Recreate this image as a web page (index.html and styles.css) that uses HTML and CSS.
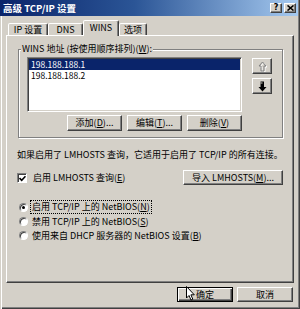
FILE: index.html
```html
<!DOCTYPE html>
<html lang="zh-CN">
<head>
<meta charset="utf-8">
<title>高级 TCP/IP 设置</title>
<link rel="stylesheet" href="styles.css">
</head>
<body>
<div class="window">
  <div class="titlebar">
    <span class="title">高级 TCP/IP 设置</span>
    <div class="tbtns">
      <span class="tbtn">?</span>
      <span class="tbtn"><svg width="7" height="6" viewBox="0 0 7 6"><path d="M0.5 0.5 L6.5 5.5 M6.5 0.5 L0.5 5.5" stroke="#000" stroke-width="1.6"/></svg></span>
    </div>
  </div>
  <div class="main">
    <div class="tabs">
      <div class="tab t1">IP 设置</div>
      <div class="tab t2">DNS</div>
      <div class="tab t3 active">WINS</div>
      <div class="tab t4">选项</div>
    </div>
    <div class="panel">
      <div class="group">
        <span class="legend">WINS 地址 (按使用顺序排列)(<u>W</u>):</span>
        <div class="group-main">
          <div class="listbox">
            <div class="item sel">198.188.188.1</div>
            <div class="item">198.188.188.2</div>
          </div>
          <div class="arrows">
            <div class="btn sq">
              <svg width="9" height="11" viewBox="0 0 9 11"><path d="M5.5 2 L9 6 H7 V11 H4 V6 H2 Z" fill="none" stroke="#fff"/><path d="M4.5 1 L8 5 H6 V10 H3 V5 H1 Z" fill="none" stroke="#808080"/></svg>
            </div>
            <div class="btn sq">
              <svg width="9" height="11" viewBox="0 0 9 11"><path d="M2.5 0.5 H6 V6 H8.5 L4.5 10.5 L0.5 6 H2.5 Z" fill="#000"/><path d="M2.5 2 H4.5" stroke="#d4d0c8" stroke-width="1"/></svg>
            </div>
          </div>
        </div>
        <div class="btnrow">
          <div class="btn pb">添加(<u>D</u>)...</div>
          <div class="btn pb">编辑(<u>T</u>)...</div>
          <div class="btn pb">删除(<u>V</u>)</div>
        </div>
      </div>
      <p class="note">如果启用了 LMHOSTS 查询，它适用于启用了 TCP/IP 的所有连接。</p>
      <div class="lmrow">
        <div class="check">
          <span class="cbox"><svg width="7" height="7" viewBox="0 0 7 7"><path d="M0.5 3 L2.7 5.3 L6.5 1.2" fill="none" stroke="#000" stroke-width="1.6"/></svg></span>
          <span>启用 LMHOSTS 查询(<u>E</u>)</span>
        </div>
        <div class="btn import">导入 LMHOSTS(<u>M</u>)...</div>
      </div>
      <div class="radios">
        <div class="radio"><span class="rcircle on"></span><span class="focus">启用 TCP/IP 上的 NetBIOS(<u>N</u>)</span></div>
        <div class="radio"><span class="rcircle"></span><span class="rlabel">禁用 TCP/IP 上的 NetBIOS(<u>S</u>)</span></div>
        <div class="radio"><span class="rcircle"></span><span class="rlabel">使用来自 DHCP 服务器的 NetBIOS 设置(<u>B</u>)</span></div>
      </div>
    </div>
    <div class="footer">
      <div class="btn fb default">确定</div>
      <div class="btn fb">取消</div>
    </div>
  </div>
  <svg class="cursor" width="9" height="15" viewBox="0 0 9 15"><path d="M0.5 0.5 V12 L3 9.5 L5 14 L6.8 13.2 L4.9 8.8 H8.3 Z" fill="#fff" stroke="#000" stroke-width="1"/></svg>
</div>
</body>
</html>
```

FILE: styles.css
```css
* { box-sizing: border-box; }

body {
  margin: 0;
  background: #d4d0c8;
  font-family: "Noto Sans CJK SC", "Noto Sans", sans-serif;
  font-size: 9px;
  color: #000;
}

u { text-decoration: underline; text-underline-offset: 1px; }

.window {
  position: relative;
  width: 300px;
  height: 309px;
  padding: 0 2px 2px 0;
  display: flex;
  flex-direction: column;
  box-shadow: inset 1px 0 0 #d4d0c8, inset 2px 0 0 #fff, inset -1px -1px 0 #404040, inset -2px -2px 0 #808080;
}

.titlebar {
  height: 16px;
  flex: none;
  display: flex;
  align-items: center;
  justify-content: space-between;
  padding: 0 2px 0 3px;
  background: linear-gradient(90deg, #0a246a 0%, #2b5596 45%, #a6caf0 100%);
}

.title {
  color: #fff;
  font-weight: bold;
  font-size: 9.5px;
  line-height: 16px;
  white-space: nowrap;
}

.tbtns { display: flex; gap: 2px; }

.tbtn {
  width: 12px;
  height: 10px;
  background: #d4d0c8;
  border: 1px solid;
  border-color: #fff #404040 #404040 #fff;
  box-shadow: inset -1px -1px 0 #808080;
  display: flex;
  align-items: center;
  justify-content: center;
  font: bold 8px "DejaVu Sans", sans-serif;
  line-height: 1;
  color: #000;
}

.main {
  flex: 1;
  display: flex;
  flex-direction: column;
  padding: 4px 4px 0 6px;
}

.tabs {
  display: flex;
  align-items: flex-end;
  height: 15px;
  padding-left: 2px;
  position: relative;
  z-index: 1;
}

.tab {
  height: 12px;
  border: 1px solid;
  border-bottom: none;
  border-color: #fff #404040 transparent #fff;
  border-radius: 2px 2px 0 0;
  box-shadow: inset -1px 0 0 #808080;
  text-align: center;
  line-height: 11px;
  white-space: nowrap;
  background: #d4d0c8;
}

.t1 { width: 40px; }
.t2 { width: 35px; }
.t3 { width: 36px; }
.t4 { width: 28px; }

.tab.active {
  height: 16px;
  margin-bottom: -1px;
  line-height: 11px;
  padding-top: 1px;
}

.panel {
  height: 248px;
  flex: none;
  border: 1px solid;
  border-color: #fff #404040 #404040 #fff;
  box-shadow: inset -1px -1px 0 #808080;
  padding: 13px 10px 0 11px;
  display: flex;
  flex-direction: column;
}

.group {
  position: relative;
  border: 1px solid #808080;
  box-shadow: 1px 1px 0 #fff, inset 1px 1px 0 #fff;
  padding: 7px 8px 6px 8px;
}

.legend {
  position: absolute;
  top: -7px;
  left: 2px;
  padding: 0 1px;
  background: #d4d0c8;
  line-height: 12px;
  white-space: nowrap;
}

.group-main { display: flex; align-items: flex-start; }

.listbox {
  width: 215px;
  height: 55px;
  background: #fff;
  border: 1px solid;
  border-color: #808080 #fff #fff #808080;
  box-shadow: inset 1px 1px 0 #404040, inset -1px -1px 0 #d4d0c8;
  padding: 1px;
}

.item {
  height: 11px;
  line-height: 11px;
  font-size: 8.5px;
  padding-left: 2px;
  white-space: nowrap;
}

.item.sel { background: #0a246a; color: #fff; }

.arrows {
  display: flex;
  flex-direction: column;
  gap: 4px;
  margin: 1px 0 0 10px;
}

.btn {
  background: #d4d0c8;
  border: 1px solid;
  border-color: #fff #404040 #404040 #fff;
  box-shadow: inset -1px -1px 0 #808080;
  display: flex;
  align-items: center;
  justify-content: center;
  white-space: nowrap;
  line-height: 12px;
}

.sq { width: 20px; height: 16px; }

.btnrow {
  width: 215px;
  display: flex;
  justify-content: flex-end;
  gap: 5px;
  margin-top: 3px;
}

.pb { width: 55px; height: 16px; }

.note {
  margin: 11px 0 0 -1px;
  line-height: 12px;
  white-space: nowrap;
}

.lmrow {
  display: flex;
  align-items: center;
  justify-content: space-between;
  height: 15px;
  margin-top: 9px;
}

.check {
  display: flex;
  align-items: center;
  gap: 6px;
  margin-left: -1px;
}

.cbox {
  width: 10px;
  height: 10px;
  background: #fff;
  border: 1px solid;
  border-color: #808080 #fff #fff #808080;
  box-shadow: inset 1px 1px 0 #404040;
  display: flex;
  align-items: center;
  justify-content: center;
  padding: 1px 0 0 1px;
}

.import { width: 100px; height: 15px; }

.radios {
  margin: 15px 0 0 1px;
}

.radio {
  display: flex;
  align-items: center;
  gap: 3px;
  height: 14px;
}

.rcircle {
  width: 9px;
  height: 9px;
  border-radius: 50%;
  background: #fff;
  border: 1px solid;
  border-color: #808080 #fff #fff #808080;
  box-shadow: inset 1px 1px 0 #404040;
  position: relative;
  flex: none;
}

.rcircle.on::after {
  content: "";
  position: absolute;
  left: 2px;
  top: 2px;
  width: 3px;
  height: 3px;
  border-radius: 50%;
  background: #000;
}

.focus {
  outline: 1px dotted #000;
  outline-offset: 0;
  padding: 0 1px;
  line-height: 12px;
  white-space: nowrap;
}

.rlabel { padding: 0 1px; white-space: nowrap; }

.footer {
  display: flex;
  justify-content: flex-end;
  gap: 4px;
  margin-top: 4px;
  padding-right: 1px;
}

.fb { width: 56px; height: 15px; }

.default {
  border-color: #000;
  box-shadow: inset 1px 1px 0 #fff, inset -1px -1px 0 #404040, inset -2px -2px 0 #808080;
}

.cursor {
  position: absolute;
  left: 186px;
  top: 286px;
}
```
